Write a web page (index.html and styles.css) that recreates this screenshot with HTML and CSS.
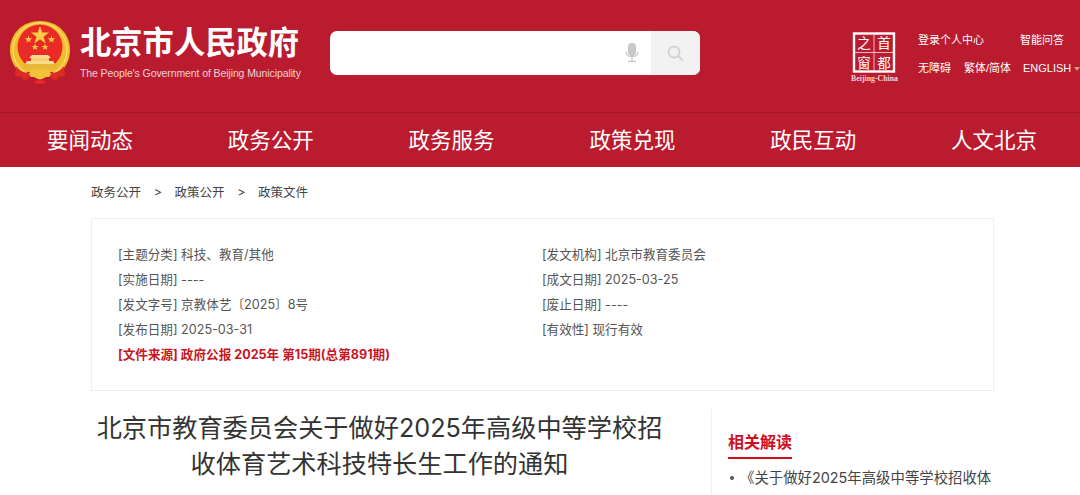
FILE: index.html
```html
<!DOCTYPE html>
<html lang="zh-CN">
<head>
<meta charset="utf-8">
<title>北京市人民政府</title>
<link rel="stylesheet" href="styles.css">
</head>
<body>
<header class="masthead">
  <div class="brand">
    <svg class="emblem" width="62" height="66" viewBox="0 0 62 66">
      <path d="M11 52C4 46 1 38 1 30 1 13 14 1 31 1s30 12 30 29c0 8-3 16-10 22z" fill="#f0bc2c"/>
      <circle cx="31" cy="30" r="27" fill="none" stroke="#f9d968" stroke-width="1.500"/>
      <circle cx="31" cy="27" r="22.500" fill="#ea2a26"/>
      <polygon points="31,6 33.200,12.600 40,12.600 34.500,16.700 36.600,23.400 31,19.300 25.400,23.400 27.500,16.700 22,12.600 28.800,12.600" fill="#f7cf45"/>
      <polygon points="19.500,15.500 20.400,18.200 23.200,18.200 21,19.900 21.800,22.600 19.500,21 17.200,22.600 18,19.900 15.800,18.200 18.600,18.200" fill="#f7cf45"/>
      <polygon points="42.500,15.500 43.400,18.200 46.200,18.200 44,19.900 44.800,22.600 42.500,21 40.200,22.600 41,19.900 38.800,18.200 41.600,18.200" fill="#f7cf45"/>
      <polygon points="26,23.500 26.900,26 29.500,26 27.400,27.600 28.200,30 26,28.500 23.800,30 24.600,27.600 22.500,26 25.100,26" fill="#f7cf45"/>
      <polygon points="36,23.500 36.900,26 39.500,26 37.400,27.600 38.200,30 36,28.500 33.800,30 34.600,27.600 32.500,26 35.100,26" fill="#f7cf45"/>
      <path d="M23 35h16l3 3H20z" fill="#f7dc8e"/>
      <path d="M22 38h18v3H22z" fill="#f4cf72"/>
      <path d="M18 41l-2 3h30l-2-3z" fill="#f7dc8e"/>
      <path d="M14 44h34v5H14z" fill="#e9b83a"/>
      <path d="M8 47c2 4 9 6 13 7l-2 5-4 2-2-4-7-1 1-9zM54 47c-2 4-9 6-13 7l2 5 4 2 2-4 7-1-1-9z" fill="#de2a25"/>
      <path d="M20 53c4-3 7-4 11-4s7 1 11 4l-2 4h-3l-6 3-6-3h-3z" fill="#f3c33a"/>
      <path d="M24 62l7-3 7 3-4 2h-6z" fill="#e8262a"/>
    </svg>
    <div class="brand-text">
      <div class="brand-zh">北京市人民政府</div>
      <div class="brand-en">The People's Government of Beijing Municipality</div>
    </div>
  </div>
  <div class="search">
    <div class="search-input">
      <svg width="14" height="20" viewBox="0 0 14 20"><rect x="3" y="0" width="8" height="13" rx="4" fill="#c8c8c8"/><path d="M1 8.500c0 7 12 7 12 0M7 15v3M3 18.500h8" fill="none" stroke="#c8c8c8" stroke-width="1.300"/></svg>
    </div>
    <div class="search-btn">
      <svg width="17" height="17" viewBox="0 0 17 17"><circle cx="7" cy="7" r="5.500" fill="none" stroke="#d2d2d2" stroke-width="1.800"/><path d="M11 11l5 4.500" stroke="#d2d2d2" stroke-width="1.800"/></svg>
    </div>
  </div>
  <div class="capital">
    <svg width="50" height="53" viewBox="0 0 50 53">
      <rect x="4" y="2.500" width="40" height="38" fill="none" stroke="#fff" stroke-width="2.400"/>
      <path d="M24 3v37M5 21.500h38" stroke="#fff" stroke-width="0.700"/>
      <text x="14" y="17" class="capital-glyph" text-anchor="middle">之</text>
      <text x="34" y="17" class="capital-glyph" text-anchor="middle">首</text>
      <text x="14" y="37" class="capital-glyph" text-anchor="middle">窗</text>
      <text x="34" y="37" class="capital-glyph" text-anchor="middle">都</text>
      <text x="24.500" y="50" class="capital-caption" text-anchor="middle">Beijing-China</text>
    </svg>
  </div>
  <div class="tools">
    <div class="tools-row">
      <a class="tool login">登录个人中心</a>
      <a class="tool">智能问答</a>
    </div>
    <div class="tools-row">
      <a class="tool access">无障碍</a>
      <a class="tool simp">繁体/简体</a>
      <a class="tool eng">ENGLISH<span class="caret"></span></a>
    </div>
  </div>
</header>
<nav class="mainnav">
  <a>要闻动态</a><a>政务公开</a><a>政务服务</a><a>政策兑现</a><a>政民互动</a><a>人文北京</a>
</nav>
<main class="content">
  <div class="crumbs"><span>政务公开</span><i>&gt;</i><span>政策公开</span><i>&gt;</i><span>政策文件</span></div>
  <section class="meta">
    <div class="meta-col left">
      <p>[主题分类] 科技、教育/其他</p>
      <p>[实施日期] ----</p>
      <p>[发文字号] 京教体艺〔2025〕8号</p>
      <p>[发布日期] 2025-03-31</p>
      <p class="source">[文件来源] 政府公报 2025年 第15期(总第891期)</p>
    </div>
    <div class="meta-col">
      <p>[发文机构] 北京市教育委员会</p>
      <p>[成文日期] 2025-03-25</p>
      <p>[废止日期] ----</p>
      <p>[有效性] 现行有效</p>
    </div>
  </section>
  <div class="article-wrap">
    <article class="article">
      <h1>北京市教育委员会关于做好2025年高级中等学校招收体育艺术科技特长生工作的通知</h1>
    </article>
    <aside class="related">
      <h2><span>相关解读</span></h2>
      <ul><li>《关于做好2025年高级中等学校招收体</li></ul>
    </aside>
  </div>
</main>
</body>
</html>
```
FILE: styles.css
```css
* { box-sizing: border-box; }
html, body { margin: 0; padding: 0; height: 495px; overflow: hidden; }
body { background: #fff; font-family: Inter, "Noto Sans CJK SC", sans-serif; color: #333; }
p, h1, h2, ul { margin: 0; padding: 0; }

.masthead { height: 113px; background: #bb1b2e; border-bottom: 1px solid #9c1728; display: flex; align-items: flex-start; color: #fff; font-family: "Liberation Sans", "Noto Sans CJK SC", sans-serif; }
.brand { display: flex; width: 330px; padding: 20px 0 0 9px; flex: none; }
.emblem { flex: none; }
.brand-text { margin-left: 9px; }
.brand-zh { font-size: 31.300px; font-weight: 700; line-height: 36px; margin-top: 6px; white-space: nowrap; width: 221px; }
.brand-en { font-size: 10.500px; line-height: 14px; margin-top: 4px; color: #f0d2d6; white-space: nowrap; letter-spacing: -0.100px; }

.search { flex: none; width: 370px; height: 44px; margin-top: 31px; border-radius: 7px; overflow: hidden; display: flex; background: #fff; }
.search-input { flex: 1; display: flex; justify-content: flex-end; align-items: center; padding-right: 12px; }
.search-btn { width: 49px; background: #f2f2f2; display: flex; align-items: center; justify-content: center; }

.capital { flex: none; margin: 31px 0 0 150px; width: 50px; }
.capital svg { display: block; }
.capital-glyph { font-family: "Noto Sans CJK SC", sans-serif; font-size: 13.500px; fill: #fff; }
.capital-caption { font-family: "Liberation Serif", serif; font-size: 7.800px; font-weight: 700; fill: #f3d6da; }

.tools { flex: none; margin: 32px 0 0 18px; font-size: 11px; line-height: 16px; }
.tools-row { display: flex; white-space: nowrap; height: 28px; }
.login { width: 102px; }
.access { width: 46px; }
.simp { width: 59px; }
.caret { display: inline-block; border: 3px solid transparent; border-top: 4px solid #d9a066; border-bottom: 0; margin-left: 3px; vertical-align: middle; }

.mainnav { height: 54px; background: #bb1b2e; display: flex; justify-content: space-between; padding: 0 43px 4px 47px; align-items: center; color: #fff; font-size: 21.500px; font-family: "Liberation Sans", "Noto Sans CJK SC", sans-serif; }
.mainnav a { white-space: nowrap; }

.content { padding: 0 86px 0 91px; }
.crumbs { height: 51px; padding-bottom: 2px; display: flex; align-items: center; font-size: 12.500px; color: #444; }
.crumbs i { font-style: normal; width: 33.500px; text-align: center; }
.meta { width: 903px; height: 173px; border: 1px solid #f0efe8; display: flex; padding: 23px 0 0 26px; font-size: 12.600px; color: #555; }
.meta-col { flex: none; }
.meta-col.left { width: 424px; }
.meta p { line-height: 25px; height: 25px; white-space: nowrap; }
.meta .source { color: #c8161f; font-weight: 700; }

.article-wrap { display: flex; margin-top: 18px; }
.article { width: 621px; padding: 1px 45px 0 0; flex: none; border-right: 1px solid #f0efe8; height: 92px; }
.article h1 { font-size: 25.200px; font-weight: 400; line-height: 36px; text-align: center; color: #333; width: 577px; }
.related { padding: 0 0 0 16px; flex: none; width: 280px; }
.related h2 { font-size: 16px; font-weight: 700; color: #d00d1c; margin-top: 22px; line-height: 22px; height: 28px; }
.related h2 span { display: inline-block; border-bottom: 2px solid #d00d1c; height: 28px; }
.related ul { list-style: none; margin-top: 8px; }
.related li { font-size: 14.400px; line-height: 22px; color: #444; white-space: nowrap; position: relative; padding-left: 12px; }
.related li::before { content: ""; position: absolute; left: 2px; top: 9px; width: 4px; height: 4px; border-radius: 50%; background: #555; }
```
